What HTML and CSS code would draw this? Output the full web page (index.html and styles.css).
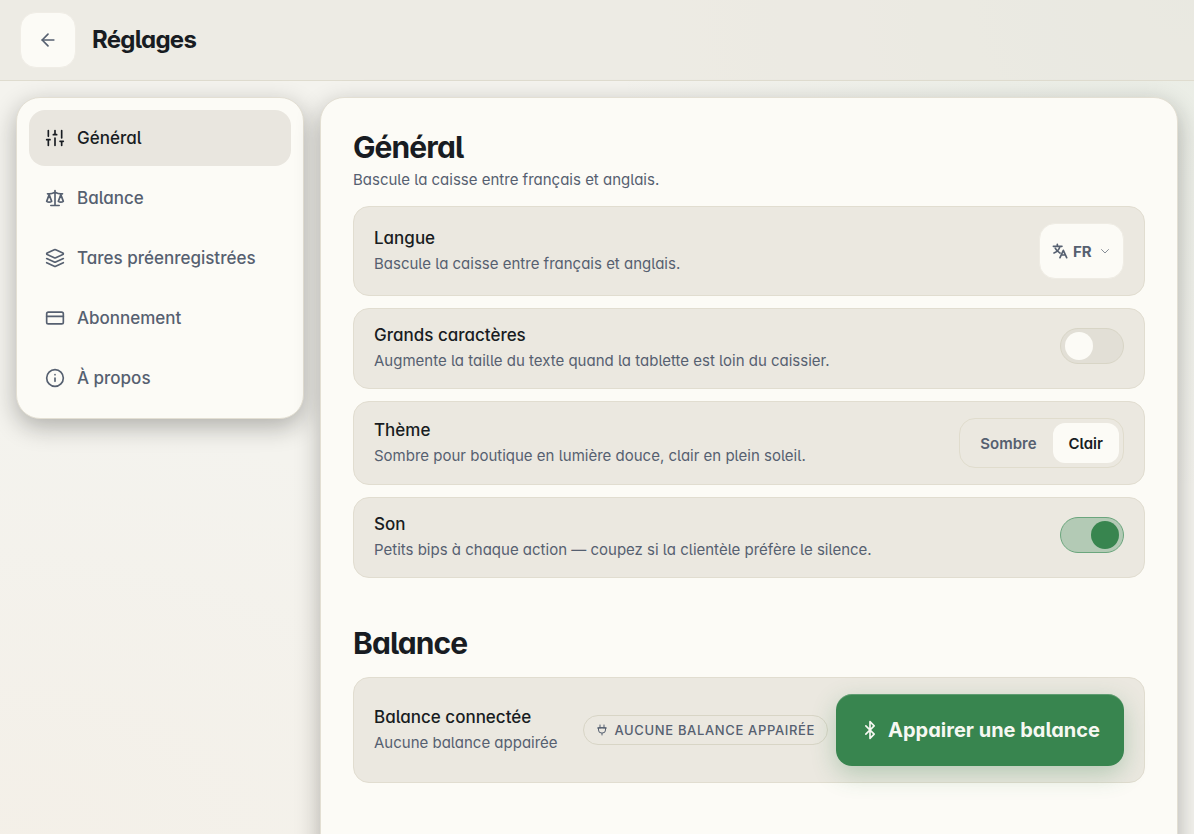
FILE: index.html
```html
<!doctype html>
<html lang="fr">
	<head>
		<meta charset="UTF-8">
		<meta name="viewport" content="width=device-width, initial-scale=1">
		<title>Réglages</title>
		<link rel="stylesheet" href="styles.css">
	</head>
	<body>
		<header class="entete">
			<button class="retour" type="button" aria-label="Retour">
				<svg class="icone" width="20" height="20" viewBox="0 0 24 24"><path d="m12 19-7-7 7-7"/><path d="M19 12H5"/></svg>
			</button>
			<h1>Réglages</h1>
		</header>
		<div class="page">
			<nav class="menu">
				<a class="lien actif" href="#general">
					<svg class="icone" width="20" height="20" viewBox="0 0 24 24"><path d="M4 21v-7M4 10V3M12 21v-9M12 8V3M20 21v-5M20 12V3M2 14h4M10 8h4M18 16h4"/></svg>
					Général
				</a>
				<a class="lien" href="#balance">
					<svg class="icone" width="20" height="20" viewBox="0 0 24 24"><path d="m16 16 3-8 3 8c-.87.65-1.92 1-3 1s-2.13-.35-3-1Z"/><path d="m2 16 3-8 3 8c-.87.65-1.92 1-3 1s-2.13-.35-3-1Z"/><path d="M7 21h10M12 3v18M3 7h2c2 0 5-1 7-2 2 1 5 2 7 2h2"/></svg>
					Balance
				</a>
				<a class="lien" href="#tares">
					<svg class="icone" width="20" height="20" viewBox="0 0 24 24"><path d="m12.83 2.18a2 2 0 0 0-1.66 0L2.6 6.08a1 1 0 0 0 0 1.83l8.58 3.91a2 2 0 0 0 1.66 0l8.58-3.9a1 1 0 0 0 0-1.83Z"/><path d="m22 17.65-9.17 4.16a2 2 0 0 1-1.66 0L2 17.65"/><path d="m22 12.65-9.17 4.16a2 2 0 0 1-1.66 0L2 12.65"/></svg>
					Tares préenregistrées
				</a>
				<a class="lien" href="#abonnement">
					<svg class="icone" width="20" height="20" viewBox="0 0 24 24"><rect width="20" height="14" x="2" y="5" rx="2"/><path d="M2 10h20"/></svg>
					Abonnement
				</a>
				<a class="lien" href="#apropos">
					<svg class="icone" width="20" height="20" viewBox="0 0 24 24"><circle cx="12" cy="12" r="10"/><path d="M12 16v-4M12 8h.01"/></svg>
					À propos
				</a>
			</nav>
			<main class="panneau">
				<section class="section" id="general">
					<div>
						<h2>Général</h2>
						<p class="intro">Bascule la caisse entre français et anglais.</p>
					</div>
					<div class="liste">
						<div class="carte">
							<div class="texte">
								<label class="titre" for="langue">Langue</label>
								<p class="detail">Bascule la caisse entre français et anglais.</p>
							</div>
							<div class="langue">
								<svg class="icone gras" width="16" height="16" viewBox="0 0 24 24"><path d="M2 5h13M8 2v3M12 5c-1 4-4 8-9 10M5 8c2 4 4 5 7 7M12 22l5-11 5 11M14 18h6"/></svg>
								<select id="langue">
									<option value="fr">FR</option>
									<option value="en">EN</option>
								</select>
								<svg class="icone chevron" width="12" height="12" viewBox="0 0 24 24"><path d="m5 9 7 7 7-7"/></svg>
							</div>
						</div>
						<div class="carte">
							<div class="texte">
								<label class="titre" for="grands">Grands caractères</label>
								<p class="detail">Augmente la taille du texte quand la tablette est loin du caissier.</p>
							</div>
							<input class="bascule" type="checkbox" id="grands">
						</div>
						<div class="carte">
							<div class="texte">
								<p class="titre">Thème</p>
								<p class="detail">Sombre pour boutique en lumière douce, clair en plein soleil.</p>
							</div>
							<div class="choix">
								<button type="button">Sombre</button>
								<button class="choisi" type="button">Clair</button>
							</div>
						</div>
						<div class="carte">
							<div class="texte">
								<label class="titre" for="son">Son</label>
								<p class="detail">Petits bips à chaque action — coupez si la clientèle préfère le silence.</p>
							</div>
							<input class="bascule" type="checkbox" id="son" checked>
						</div>
					</div>
				</section>
				<section class="section" id="balance">
					<h2>Balance</h2>
					<div class="carte">
						<div class="texte">
							<p class="titre">Balance connectée</p>
							<p class="detail">Aucune balance appairée</p>
						</div>
						<div class="actions">
							<span class="etat">
								<svg class="icone" width="12" height="12" viewBox="0 0 24 24"><path d="M12 22v-4M8 8V2M16 8V2M19 8v4a6 6 0 0 1-6 6h-2a6 6 0 0 1-6-6V8ZM3 8h18"/></svg>
								Aucune balance appairée
							</span>
							<button class="appairer" type="button">
								<svg class="icone" width="20" height="20" viewBox="0 0 24 24"><path d="m7 7 10 10-5 5V2l5 5L7 17"/></svg>
								Appairer une balance
							</button>
						</div>
					</div>
				</section>
			</main>
		</div>
	</body>
</html>
```
FILE: styles.css
```css
*
{
	box-sizing: border-box;
}
body
{
	margin: 0;
	min-height: 100vh;
	font-family: Inter, "Liberation Sans", sans-serif;
	font-feature-settings: "cv11", "cv05";
	font-size: 15px;
	color: #181c22;
	background:
		radial-gradient(ellipse 50% 60% at 100% 0, rgba(56, 133, 79, 0.06), transparent),
		radial-gradient(ellipse 60% 50% at 0 100%, rgba(240, 200, 160, 0.08), transparent),
		#f4f3ee;
	background-attachment: fixed;
}
h1, h2, p
{
	margin: 0;
}
button, select
{
	font: inherit;
	font-feature-settings: inherit;
	cursor: pointer;
}
.icone
{
	flex: none;
	fill: none;
	stroke: currentColor;
	stroke-width: 2;
	stroke-linecap: round;
	stroke-linejoin: round;
}
.gras
{
	stroke-width: 2.5;
}
.entete
{
	display: flex;
	align-items: center;
	gap: 16px;
	padding: 12px 20px;
	background: rgba(234, 230, 222, 0.65);
	border-bottom: 1px solid #dfdccf;
}
.retour
{
	display: flex;
	align-items: center;
	justify-content: center;
	width: 56px;
	height: 56px;
	padding: 0;
	color: #566070;
	background: #fcfbf6;
	border: 1px solid #f0ede6;
	border-radius: 16px;
}
h1
{
	font-size: 24px;
	line-height: 32px;
	font-weight: 700;
	letter-spacing: -0.03em;
}
.page
{
	display: flex;
	align-items: flex-start;
	gap: 16px;
	padding: 16px;
}
.menu, .panneau
{
	background: #fcfbf6;
	border: 1px solid #e3dfd3;
	border-radius: 24px;
	box-shadow: 0 8px 24px rgba(20, 20, 16, 0.3);
}
.menu
{
	display: flex;
	flex-direction: column;
	gap: 4px;
	flex: none;
	width: 288px;
	padding: 12px;
}
.lien
{
	display: flex;
	align-items: center;
	gap: 12px;
	height: 56px;
	padding: 0 16px;
	font-size: 17px;
	font-weight: 500;
	color: #566070;
	text-decoration: none;
	border-radius: 16px;
}
.actif
{
	color: #181c22;
	background: #e9e6df;
}
.panneau
{
	display: flex;
	flex-direction: column;
	gap: 48px;
	flex: 1;
	min-width: 0;
	min-height: 100vh;
	padding: 32px;
}
.section
{
	display: flex;
	flex-direction: column;
	gap: 16px;
}
h2
{
	font-size: 30px;
	line-height: 35px;
	font-weight: 700;
	letter-spacing: -0.03em;
}
.intro
{
	margin-top: 4px;
	line-height: 21px;
	color: #566070;
}
.liste
{
	display: flex;
	flex-direction: column;
	gap: 12px;
}
.carte
{
	display: flex;
	align-items: center;
	justify-content: space-between;
	gap: 16px;
	padding: 16px 20px;
	background: #ebe8e0;
	border: 1px solid #e1ddd0;
	border-radius: 16px;
}
.texte
{
	display: flex;
	flex-direction: column;
	gap: 5px;
}
.titre
{
	font-size: 17px;
	line-height: 20px;
	font-weight: 500;
}
.detail
{
	line-height: 22px;
	color: #566070;
}
.langue
{
	display: flex;
	align-items: center;
	gap: 5px;
	height: 56px;
	padding: 0 12px;
	color: #566070;
	background: #fcfbf6;
	border: 1px solid #efece4;
	border-radius: 16px;
}
.langue select
{
	padding: 0;
	font-weight: 700;
	color: inherit;
	background: none;
	border: 0;
	appearance: none;
}
.chevron
{
	opacity: 0.7;
}
.bascule
{
	flex: none;
	width: 64px;
	height: 36px;
	margin: 0 0 6px;
	padding: 3px 4px;
	background: #e2dfd6;
	border: 1px solid #d8d5c6;
	border-radius: 18px;
	appearance: none;
	cursor: pointer;
}
.bascule::before
{
	content: "";
	display: block;
	width: 28px;
	height: 28px;
	background: #fcfbf6;
	border-radius: 50%;
}
.bascule:checked
{
	background: #b3cab5;
	border-color: #6ba67d;
}
.bascule:checked::before
{
	margin-left: auto;
	background: #38854f;
}
.choix
{
	display: flex;
	padding: 4px;
	border: 1px solid #e0dccd;
	border-radius: 16px;
}
.choix button
{
	height: 40px;
	padding: 0 16px;
	font-weight: 600;
	color: #566070;
	background: none;
	border: 0;
	border-radius: 12px;
}
.choix .choisi
{
	color: #181c22;
	background: #fcfbf6;
}
.actions
{
	display: flex;
	align-items: center;
	gap: 8px;
}
.etat
{
	display: flex;
	align-items: center;
	gap: 6px;
	padding: 4px 12px;
	font-size: 13px;
	line-height: 20px;
	font-weight: 500;
	letter-spacing: 0.05em;
	text-transform: uppercase;
	white-space: nowrap;
	color: #566070;
	border: 1px solid #d8d5c6;
	border-radius: 16px;
}
.appairer
{
	display: flex;
	align-items: center;
	gap: 8px;
	height: 72px;
	padding: 0 24px;
	font-size: 20px;
	font-weight: 700;
	white-space: nowrap;
	color: #f6f8f2;
	background: #38854f;
	border: 0;
	border-radius: 16px;
	box-shadow: inset 0 1px 0 rgba(255, 255, 255, 0.2), 0 8px 24px rgba(56, 133, 79, 0.3);
}
```
